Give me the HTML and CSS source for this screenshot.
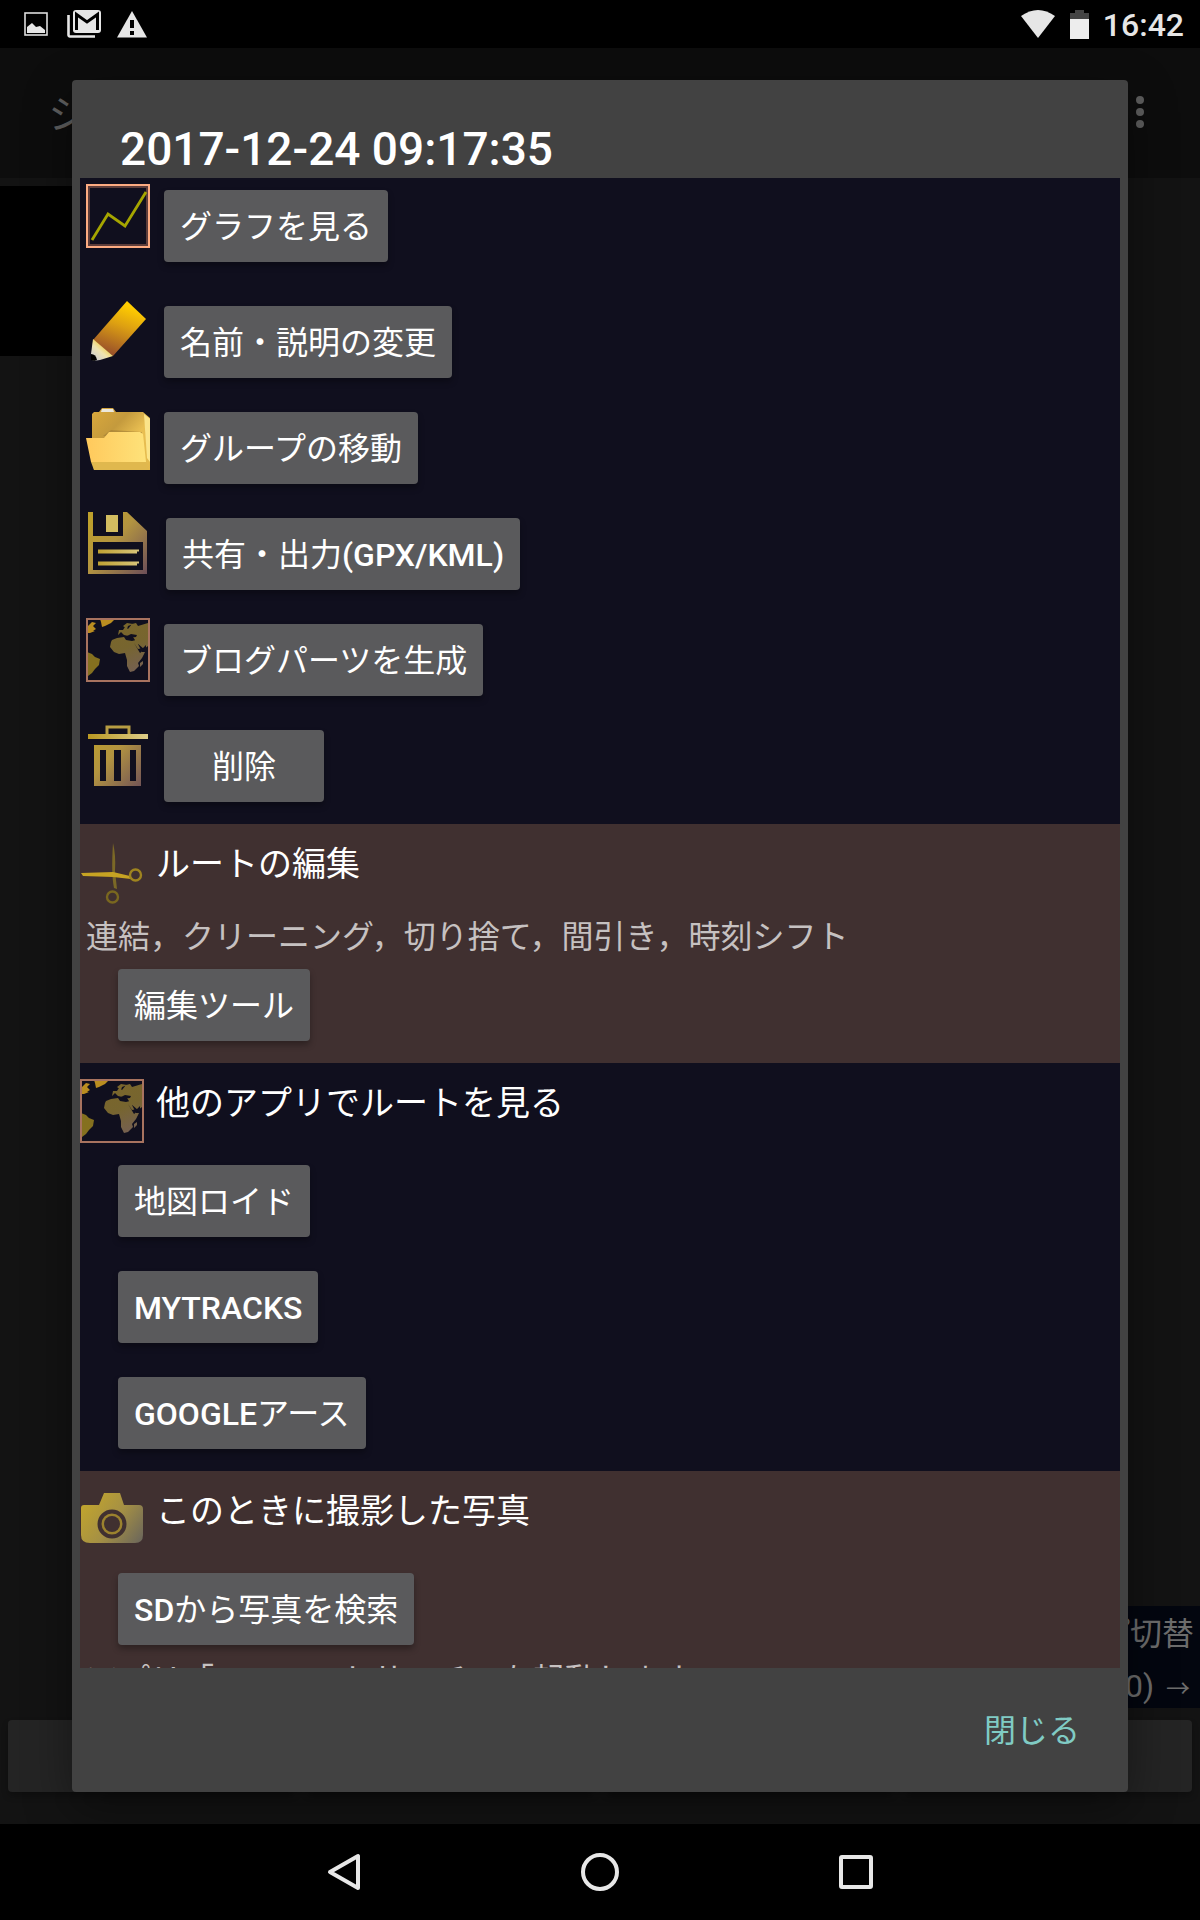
FILE: index.html
```html
<!DOCTYPE html>
<html lang="ja">
<head>
<meta charset="utf-8">
<meta name="viewport" content="width=device-width, initial-scale=1">
<title>2017-12-24 09:17:35</title>
<link rel="stylesheet" href="styles.css">
</head>
<body>
<svg class="defs" width="0" height="0" aria-hidden="true">
  <defs>
    <linearGradient id="gold" gradientUnits="userSpaceOnUse" x1="4" y1="10" x2="62" y2="60">
      <stop offset="0" stop-color="#bd9f2c"/><stop offset=".4" stop-color="#b39440"/><stop offset="1" stop-color="#6d4f58"/>
    </linearGradient>
    <linearGradient id="shine" gradientUnits="userSpaceOnUse" x1="4" y1="0" x2="60" y2="0">
      <stop offset="0" stop-color="#bb9a25"/><stop offset="1" stop-color="#dccb86"/>
    </linearGradient>
    <linearGradient id="pencil" gradientUnits="userSpaceOnUse" x1="42" y1="6" x2="24" y2="54">
      <stop offset="0" stop-color="#ffcc00"/><stop offset=".4" stop-color="#dda012"/><stop offset="1" stop-color="#99502a"/>
    </linearGradient>
    <linearGradient id="tip" gradientUnits="userSpaceOnUse" x1="20" y1="44" x2="8" y2="58">
      <stop offset="0" stop-color="#f5cc38"/><stop offset=".5" stop-color="#eee3b0"/><stop offset="1" stop-color="#cfcfcf"/>
    </linearGradient>
    <linearGradient id="folder-back" x1="0" y1="0" x2="1" y2="1">
      <stop offset="0" stop-color="#dba93c"/><stop offset=".35" stop-color="#c49a3d"/><stop offset=".6" stop-color="#e9bf52"/><stop offset="1" stop-color="#e2b84c"/>
    </linearGradient>
    <linearGradient id="folder-front" x1="0" y1="0" x2="1" y2="0">
      <stop offset="0" stop-color="#ffc95c"/><stop offset="1" stop-color="#fee27a"/>
    </linearGradient>
    <linearGradient id="land" gradientUnits="userSpaceOnUse" x1="28" y1="6" x2="50" y2="54">
      <stop offset="0" stop-color="#7a662b"/><stop offset=".5" stop-color="#77652f"/><stop offset="1" stop-color="#756052"/>
    </linearGradient>
    <linearGradient id="camera-body" gradientUnits="userSpaceOnUse" x1="2" y1="14" x2="62" y2="58">
      <stop offset="0" stop-color="#c3a52c"/><stop offset=".5" stop-color="#a59044"/><stop offset="1" stop-color="#68645c"/>
    </linearGradient>
    <symbol id="map" viewBox="0 0 64 64">
      <rect width="64" height="64" fill="#100f1e"/>
      <path fill="#ba8d20" d="M14 1h15l-4 4-6 3-3 1-1-5zM2 8l4-4 4 1-3 3 3 3-5 3H1zM2 12l7 1-5 2H1z"/>
      <path fill="#85701f" d="M1 34l5 2 3 3 5 2-1 6-4 4-3 4-4 3H1z"/>
      <path fill="url(#land)" d="M26 22l5-2 7-1 2 3 6 1 4-1 3 6 3 6h3l-3 6-4 5 1 3-5 5-4 1-3-6v-6l-2-7-6 1-5-2-4-5 1-5zM32 17l1-5h4l2-3 3 2 4-5 4-1 2 3 10-3v23l-4 3-7-6-4-6-9-2-3-3-3 3-5 1zM54 45l3-2v3l-3 3zM37 8l4-3 6 1-5 2-1 3z"/>
      <path fill="#100f1e" d="M41 18l4-2 6 1-1 2-8 1zM48 25l4 6 5-1 3-3v3l-6 5z"/>
      <rect x="1" y="1" width="62" height="62" fill="none" stroke="#a8735f" stroke-width="2"/>
    </symbol>
  </defs>
</svg>

<header class="status">
  <div class="status-group">
    <svg class="status-picture" viewBox="0 0 24 24"><rect x="1" y="1" width="22" height="22" fill="none" stroke="#ddd" stroke-width="1.6"/><path fill="#e6e6e6" d="M3 21v-6l5-4 4 4 4-1 5 4v3z"/></svg>
    <svg class="status-mail" viewBox="0 0 34 28"><path fill="none" stroke="#e6e6e6" stroke-width="2.6" d="M1.500 5v20a1.500 1.500 0 0 0 1.500 1.500h25"/><rect x="6" width="28" height="23" rx="3" fill="#e6e6e6"/><path fill="none" stroke="#000" stroke-width="3" d="M9.500 20V4.500L20 12 30.500 4.500V20"/></svg>
    <svg class="status-warn" viewBox="0 0 30 27"><path fill="#e6e6e6" d="M15 0L30 26.500H0z"/><path fill="#000" d="M13 9h4v8h-4zM13 20h4v4h-4z"/></svg>
  </div>
  <div class="status-group">
    <svg class="status-wifi" viewBox="0 0 34 28"><path fill="#e6e6e6" d="M0 6Q17-6 34 6L17 28z"/></svg>
    <svg class="status-battery" viewBox="0 0 19 29"><path fill="#444" d="M5 0h9v3h5v6H0V3h5z"/><path fill="#ededed" d="M0 9h19v20H0z"/></svg>
    <time class="clock">16:42</time>
  </div>
</header>

<main class="stage">
  <div class="backdrop">
    <div class="appbar">
      <span class="appbar-title">シ</span>
      <svg class="more" viewBox="0 0 8 32"><circle cx="4" cy="4" r="4"/><circle cx="4" cy="16" r="4"/><circle cx="4" cy="28" r="4"/></svg>
    </div>
    <div class="preview"></div>
    <div class="switcher"><span>グループ切替</span><span>(0) <span class="arrow">→</span></span></div>
    <div class="toolbar"><span></span><span></span><span></span><span></span></div>
  </div>

  <section class="dialog" role="dialog" aria-labelledby="dialog-title">
    <h1 class="dialog-title" id="dialog-title">2017-12-24 09:17:35</h1>
    <div class="scroller">
      <div class="panel actions">
        <div class="action">
          <svg class="icon" viewBox="0 0 64 64"><rect x="3" y="3" width="58" height="58" fill="none" stroke="#5c3c3a" stroke-width="2"/><rect x="1" y="1" width="62" height="62" fill="none" stroke="#fcab82" stroke-width="2"/><path d="M6 56L22 30l17 12L60 8" fill="none" stroke="#a5a500" stroke-width="2.800"/></svg>
          <button class="btn">グラフを見る</button>
        </div>
        <div class="action">
          <svg class="icon" viewBox="0 0 64 64"><path fill="url(#pencil)" d="M41 1L60 19 27 56 7 40z"/><path fill="url(#tip)" d="M7 39l20 17-13 4-7 1-2-7z"/><path fill="#000" d="M5 54q5 0 6 6l-3 1-3-1z"/></svg>
          <button class="btn">名前・説明の変更</button>
        </div>
        <div class="action">
          <svg class="icon" viewBox="0 0 64 64"><path fill="url(#folder-back)" d="M6 8l2-2h5l3-4h11l3 4h27l7 6v52H8L6 50z"/><path fill="#ebe8dd" d="M16 3h11l1 3H15z"/><path fill="#9d7a34" opacity=".55" d="M17 30l8-6 31 2v5z"/><path fill="url(#folder-front)" d="M0 32h18l5-6h31l3 2 3 28H5z"/><path fill="#e0b84e" d="M5 56h56l1 8H8z"/><path fill="#fbe489" d="M58 8l6 5v43l-3-4z"/></svg>
          <button class="btn">グループの移動</button>
        </div>
        <div class="action action-wide">
          <svg class="icon" viewBox="0 0 64 64"><path fill="url(#gold)" fill-rule="evenodd" d="M2 0h5v24h30V0h4l20 19v43H2zM7 30v28h50V30z"/><path fill="#d3bd60" d="M20 3h12v17H20z"/><path stroke="url(#shine)" stroke-width="4" d="M12 39.500h39v.1M12 51.500h39v.1" fill="none"/></svg>
          <button class="btn">共有・出力<span class="latin">(GPX/KML)</span></button>
        </div>
        <div class="action">
          <svg class="icon"><use href="#map"/></svg>
          <button class="btn">ブログパーツを生成</button>
        </div>
        <div class="action">
          <svg class="icon" viewBox="0 0 64 64"><path fill="none" stroke="#b79d43" stroke-width="3" d="M21 11V3h22v8"/><path fill="url(#shine)" d="M2 10h60v5H2z"/><path fill="url(#gold)" fill-rule="evenodd" d="M8 21h47v41H8zM14 26v31h6V26zM28 26v31h7V26zM44 26v31h6V26z"/></svg>
          <button class="btn btn-min">削除</button>
        </div>
      </div>

      <section class="panel tinted">
        <div class="panel-head">
          <svg class="icon" viewBox="0 0 64 64"><path fill="#7b6826" d="M33 3q3 12 2 28l2 18-3-1q-3-14-1-45z"/><path fill="#c7a323" d="M1 33l32-1 17 4 1 3-18-2-30-1z"/><circle cx="55.500" cy="35" r="5.500" fill="none" stroke="#9f841f" stroke-width="2.400"/><circle cx="32.500" cy="57" r="5.500" fill="none" stroke="#79671f" stroke-width="2.400"/></svg>
          <h2>ルートの編集</h2>
        </div>
        <p class="note">連結，クリーニング，切り捨て，間引き，時刻シフト</p>
        <div class="tools"><button class="btn">編集ツール</button></div>
      </section>

      <section class="panel">
        <div class="panel-head">
          <svg class="icon"><use href="#map"/></svg>
          <h2>他のアプリでルートを見る</h2>
        </div>
        <div class="tools spaced">
          <button class="btn">地図ロイド</button>
          <button class="btn"><span class="latin">MYTRACKS</span></button>
          <button class="btn"><span class="latin">GOOGLE</span>アース</button>
        </div>
      </section>

      <section class="panel tinted">
        <div class="panel-head">
          <svg class="icon" viewBox="0 0 64 64"><path fill="url(#camera-body)" d="M4 18h15l5-12h16l4 12h15q4 0 4 4v26q0 8-8 8H10q-9 0-9-8V21q0-3 3-3z"/><circle cx="32" cy="37" r="12.500" fill="#9b822e" stroke="#403030" stroke-width="4"/><circle cx="32" cy="37" r="8" fill="#403030"/></svg>
          <h2>このときに撮影した写真</h2>
        </div>
        <div class="tools spaced"><button class="btn"><span class="latin">SD</span>から写真を検索</button></div>
        <p class="note">アプリ「ファーストサーチ」を起動します</p>
      </section>
    </div>
    <footer class="dialog-footer"><button class="close">閉じる</button></footer>
  </section>
</main>

<nav class="navbar">
  <button aria-label="戻る"><svg viewBox="0 0 40 40"><path d="M34 4v32L6 20z"/></svg></button>
  <button aria-label="ホーム"><svg viewBox="0 0 40 40"><circle cx="20" cy="20" r="17"/></svg></button>
  <button aria-label="履歴"><svg viewBox="0 0 40 40"><rect x="5" y="5" width="30" height="30" rx="1"/></svg></button>
</nav>
</body>
</html>
```

FILE: styles.css
```css
* { box-sizing: border-box; }

body {
  margin: 0;
  height: 100vh;
  display: flex;
  flex-direction: column;
  overflow: hidden;
  background: #000;
  color: #fff;
  font-family: Roboto, "Noto Sans CJK JP", sans-serif;
  font-size: 32px;
}

h1, h2, p { margin: 0; font-weight: 400; }
svg { display: block; flex: none; }
button { font: inherit; color: inherit; border: 0; margin: 0; cursor: pointer; }
.defs { position: absolute; }

/* status bar */
.status {
  flex: none;
  height: 48px;
  padding: 0 16px 0 24px;
  display: flex;
  justify-content: space-between;
  align-items: center;
}
.status-group { display: flex; align-items: center; }
.status-picture { width: 24px; height: 24px; }
.status-mail { width: 34px; height: 28px; margin-left: 19px; }
.status-warn { width: 30px; height: 27px; margin-left: 16px; }
.status-wifi { width: 34px; height: 28px; }
.status-battery { width: 19px; height: 29px; margin: 0 14px 0 15px; }
.clock { color: #e6e6e6; font-weight: 500; line-height: 48px; padding-top: 2px; }

/* dimmed activity and the dialog share one grid cell */
.stage { flex: 1; min-height: 0; display: grid; grid-template: minmax(0, 1fr) / minmax(0, 1fr); }
.stage > * { grid-area: 1 / 1; }

.backdrop { display: flex; flex-direction: column; background: #131313; color: #6c6c6c; }
.appbar {
  height: 130px;
  padding: 0 56px 2px 48px;
  display: flex;
  justify-content: space-between;
  align-items: center;
  background: #0d0d0d;
  color: #5e5e5e;
  font-size: 40px;
}
.more { width: 8px; height: 32px; fill: #5e5e5e; }
.preview { height: 170px; margin-top: 8px; width: 50%; background: #000; }
.switcher {
  margin-top: auto;
  align-self: flex-end;
  width: 50%;
  height: 102px;
  padding: 2px 6px 0 0;
  display: flex;
  flex-direction: column;
  align-items: flex-end;
  background: #03060f;
  line-height: 52px;
}
.arrow { font-size: 24px; line-height: 24px; padding: 0 4px; }
.toolbar { display: flex; gap: 12px; padding: 12px 8px 32px; }
.toolbar span { flex: 1; height: 72px; border-radius: 4px; background: #242424; box-shadow: 0 4px 6px rgba(0, 0, 0, .25); }

.dialog {
  margin: 32px 72px;
  z-index: 1;
  display: flex;
  flex-direction: column;
  background: #424242;
  border-radius: 4px;
  box-shadow: 0 16px 48px rgba(0, 0, 0, .4);
}
.dialog-title { flex: none; height: 98px; padding: 42px 48px 0; font-size: 46px; font-weight: 500; line-height: 54px; }
.scroller { flex: 1; min-height: 0; margin: 0 8px; overflow-y: auto; scrollbar-width: none; }

.panel { background: #100f1e; }
.tinted { background: #403030; }
.icon { width: 64px; height: 64px; }

.action { display: flex; align-items: flex-start; gap: 14px; height: 106px; padding: 6px; }
.action:first-child { height: 116px; }
.action-wide { gap: 16px; }
.action .btn { margin-top: 6px; }

.btn {
  height: 72px;
  padding: 1px 16px 0;
  border-radius: 4px;
  background: #5a5a5c;
  line-height: 48px;
  box-shadow: 0 4px 6px rgba(0, 0, 0, .3);
}
.btn-min { min-width: 160px; }
.latin { font-weight: 500; }

.panel-head { display: flex; gap: 12px; padding-top: 16px; }
.panel-head h2 { font-size: 34px; line-height: 48px; }
.note { padding: 1px 6px 0; line-height: 64px; color: #c6c1c1; }
.tools { display: flex; flex-direction: column; align-items: flex-start; gap: 34px; padding: 0 38px 22px; }
.spaced { padding-top: 22px; }
.spaced + .note { margin-top: -20px; }

.dialog-footer { flex: none; height: 124px; padding: 0 48px 4px; display: flex; justify-content: flex-end; align-items: center; }
.close { padding: 0; background: none; color: #80cbc4; }

.navbar { flex: none; height: 96px; display: flex; justify-content: center; align-items: center; gap: 176px; }
.navbar button { width: 80px; height: 80px; padding: 20px; background: none; }
.navbar svg { width: 40px; height: 40px; fill: none; stroke: #e8e8e8; stroke-width: 4; stroke-linejoin: round; }
```
